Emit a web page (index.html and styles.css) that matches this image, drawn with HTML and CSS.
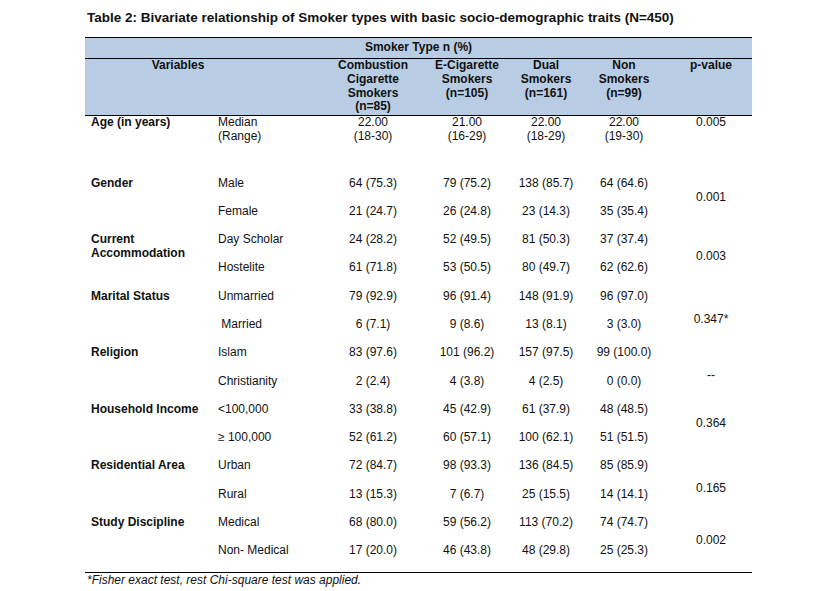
FILE: index.html
```html
<!DOCTYPE html>
<html lang="en">
<head>
    <meta charset="UTF-8">
    <meta name="viewport" content="width=device-width, initial-scale=1.0">
    <title>Table 2: Bivariate relationship of Smoker types</title>
    <link rel="stylesheet" href="styles.css">
</head>
<body>
    <div class="page">
        <!-- Titulo da tabela -->
        <h1 class="caption">Table 2: Bivariate relationship of Smoker types with basic socio-demographic traits (N=450)</h1>

        <table class="stats">
            <colgroup>
                <col class="c-var">
                <col class="c-sub">
                <col class="c-num">
                <col class="c-num">
                <col class="c-dual">
                <col class="c-non">
                <col class="c-p">
            </colgroup>
            <thead>
                <tr class="group-row">
                    <th colspan="7">Smoker Type n (%)</th>
                </tr>
                <tr class="head-row">
                    <th colspan="2" class="var-head">Variables</th>
                    <th>Combustion<br>Cigarette<br>Smokers<br>(n=85)</th>
                    <th>E-Cigarette<br>Smokers<br>(n=105)</th>
                    <th>Dual<br>Smokers<br>(n=161)</th>
                    <th>Non<br>Smokers<br>(n=99)</th>
                    <th>p-value</th>
                </tr>
            </thead>
            <tbody>
                <tr class="age-row">
                    <td class="label">Age (in years)</td>
                    <td class="sub">Median<br>(Range)</td>
                    <td>22.00<br>(18-30)</td>
                    <td>21.00<br>(16-29)</td>
                    <td>22.00<br>(18-29)</td>
                    <td>22.00<br>(19-30)</td>
                    <td>0.005</td>
                </tr>

                <tr>
                    <td class="label" rowspan="2">Gender</td>
                    <td class="sub">Male</td>
                    <td>64 (75.3)</td>
                    <td>79 (75.2)</td>
                    <td>138 (85.7)</td>
                    <td>64 (64.6)</td>
                    <td class="pval" rowspan="2">0.001</td>
                </tr>
                <tr>
                    <td class="sub">Female</td>
                    <td>21 (24.7)</td>
                    <td>26 (24.8)</td>
                    <td>23 (14.3)</td>
                    <td>35 (35.4)</td>
                </tr>

                <tr>
                    <td class="label" rowspan="2">Current<br>Accommodation</td>
                    <td class="sub">Day Scholar</td>
                    <td>24 (28.2)</td>
                    <td>52 (49.5)</td>
                    <td>81 (50.3)</td>
                    <td>37 (37.4)</td>
                    <td class="pval p-mid" rowspan="2">0.003</td>
                </tr>
                <tr>
                    <td class="sub">Hostelite</td>
                    <td>61 (71.8)</td>
                    <td>53 (50.5)</td>
                    <td>80 (49.7)</td>
                    <td>62 (62.6)</td>
                </tr>

                <tr>
                    <td class="label" rowspan="2">Marital Status</td>
                    <td class="sub">Unmarried</td>
                    <td>79 (92.9)</td>
                    <td>96 (91.4)</td>
                    <td>148 (91.9)</td>
                    <td>96 (97.0)</td>
                    <td class="pval p-low" rowspan="2">0.347*</td>
                </tr>
                <tr>
                    <td class="sub">&nbsp;Married</td>
                    <td>6 (7.1)</td>
                    <td>9 (8.6)</td>
                    <td>13 (8.1)</td>
                    <td>3 (3.0)</td>
                </tr>

                <tr>
                    <td class="label" rowspan="2">Religion</td>
                    <td class="sub">Islam</td>
                    <td>83 (97.6)</td>
                    <td>101 (96.2)</td>
                    <td>157 (97.5)</td>
                    <td>99 (100.0)</td>
                    <td class="pval p-low" rowspan="2">--</td>
                </tr>
                <tr>
                    <td class="sub">Christianity</td>
                    <td>2 (2.4)</td>
                    <td>4 (3.8)</td>
                    <td>4 (2.5)</td>
                    <td>0 (0.0)</td>
                </tr>

                <tr>
                    <td class="label" rowspan="2">Household Income</td>
                    <td class="sub">&lt;100,000</td>
                    <td>33 (38.8)</td>
                    <td>45 (42.9)</td>
                    <td>61 (37.9)</td>
                    <td>48 (48.5)</td>
                    <td class="pval" rowspan="2">0.364</td>
                </tr>
                <tr>
                    <td class="sub">&ge; 100,000</td>
                    <td>52 (61.2)</td>
                    <td>60 (57.1)</td>
                    <td>100 (62.1)</td>
                    <td>51 (51.5)</td>
                </tr>

                <tr>
                    <td class="label" rowspan="2">Residential Area</td>
                    <td class="sub">Urban</td>
                    <td>72 (84.7)</td>
                    <td>98 (93.3)</td>
                    <td>136 (84.5)</td>
                    <td>85 (85.9)</td>
                    <td class="pval p-low" rowspan="2">0.165</td>
                </tr>
                <tr>
                    <td class="sub">Rural</td>
                    <td>13 (15.3)</td>
                    <td>7 (6.7)</td>
                    <td>25 (15.5)</td>
                    <td>14 (14.1)</td>
                </tr>

                <tr>
                    <td class="label" rowspan="2">Study Discipline</td>
                    <td class="sub">Medical</td>
                    <td>68 (80.0)</td>
                    <td>59 (56.2)</td>
                    <td>113 (70.2)</td>
                    <td>74 (74.7)</td>
                    <td class="pval" rowspan="2">0.002</td>
                </tr>
                <tr class="last-row">
                    <td class="sub">Non- Medical</td>
                    <td>17 (20.0)</td>
                    <td>46 (43.8)</td>
                    <td>48 (29.8)</td>
                    <td>25 (25.3)</td>
                </tr>
            </tbody>
        </table>

        <p class="note">*Fisher exact test, rest Chi-square test was applied.</p>
    </div>
</body>
</html>
```

FILE: styles.css
```css
/* Tabela estilo documento */
body {
    margin: 0;
    padding: 0;
    background-color: #ffffff;
    color: #111111;
    font-family: "Liberation Sans", Arial, sans-serif;
}

.page {
    padding: 10px 0 0 85px;
}

.caption {
    margin: 0 0 11px 0;
    padding-left: 2px;
    font-size: 13.5px;
    line-height: 16px;
    font-weight: bold;
}

.stats {
    width: 667px;
    table-layout: fixed;
    border-collapse: collapse;
    font-size: 12px;
    line-height: 13.8px;
}

.c-var { width: 127px; }
.c-sub { width: 114px; }
.c-num { width: 94px; }
.c-dual { width: 64px; }
.c-non { width: 92px; }
.c-p { width: 82px; }

thead th {
    background-color: #b8cce4;
    font-weight: bold;
    text-align: center;
    vertical-align: top;
    padding: 0 2px;
}

.group-row th {
    height: 20px;
    vertical-align: middle;
    border-top: 1px solid #000;
    border-bottom: 1px solid #000;
}

.head-row th {
    height: 56px;
    border-bottom: 1px solid #000;
}

.var-head {
    padding-right: 57px;
}

tbody tr {
    height: 28.3px;
}

tbody td {
    text-align: center;
    vertical-align: top;
    padding: 7px 2px 0 2px;
}

tbody .label {
    text-align: left;
    font-weight: bold;
    padding-left: 6px;
}

tbody .sub {
    text-align: left;
    padding-left: 6px;
}

tbody .pval {
    vertical-align: middle;
    padding-top: 0;
}

tbody .p-mid {
    padding-top: 6px;
}

tbody .p-low {
    padding-top: 17px;
}

tbody .age-row {
    height: 54px;
}

.age-row td {
    padding-top: 0;
}

tbody .last-row {
    height: 35px;
}

.last-row td {
    padding-bottom: 7px;
}

.stats tbody {
    border-bottom: 1px solid #000;
}

.note {
    margin: 0;
    padding-left: 2px;
    font-size: 12px;
    line-height: 14px;
    font-style: italic;
}
```
